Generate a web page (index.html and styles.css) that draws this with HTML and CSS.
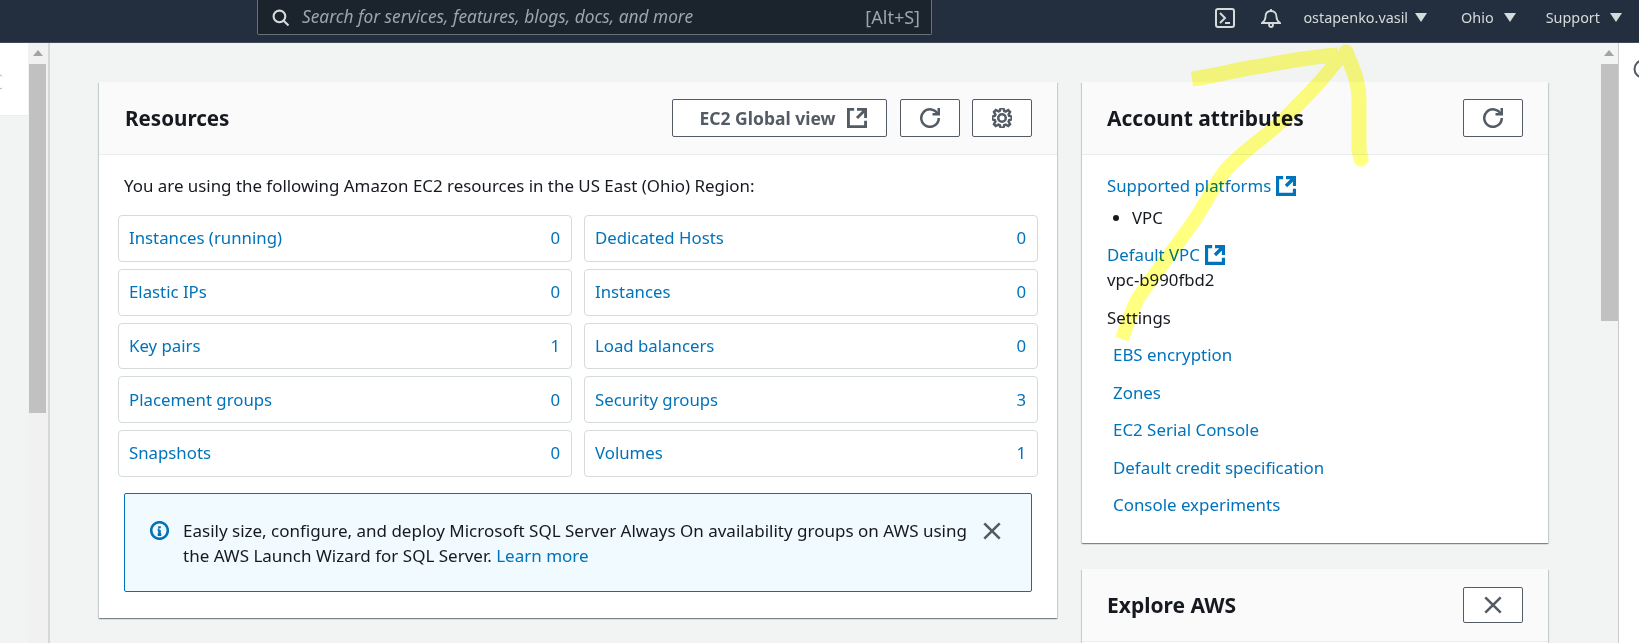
FILE: index.html
```html
<!DOCTYPE html>
<html lang="en">
<head>
<meta charset="utf-8">
<title>EC2 Dashboard</title>
<link rel="stylesheet" href="styles.css">
</head>
<body>
<header class="topbar">
  <div class="search">
    <svg class="search-icon" viewBox="0 0 16 16"><circle cx="7" cy="7" r="5.5"/><path d="M11 11l4.5 4.5"/></svg>
    <span class="search-text">Search for services, features, blogs, docs, and more</span>
    <span class="search-key">[Alt+S]</span>
  </div>
  <nav class="topnav">
    <svg class="shell" viewBox="0 0 20 20"><rect x="1" y="1" width="18" height="18" rx="2"/><path d="M5 5l5 5-5 5M10 15h5"/></svg>
    <svg class="bell" viewBox="0 0 20 20"><path d="M1 15h18c-2-1.500-3.500-3-3.500-6C15.500 5.500 13.500 3 10 3S4.500 5.500 4.500 9C4.500 12 3 13.500 1 15z"/><path d="M10 1v2"/><circle cx="10" cy="17" r="2"/></svg>
    <span class="nav-item user">ostapenko.vasil<i class="caret"></i></span>
    <span class="nav-item region">Ohio<i class="caret"></i></span>
    <span class="nav-item">Support<i class="caret"></i></span>
  </nav>
</header>

<div class="workspace">
  <aside class="sidenav">
    <svg class="side-mark" viewBox="0 0 2 16"><path d="M0 1l2 1M0 15l2-1"/></svg>
  </aside>
  <div class="scroll scroll-left"><i class="arrow"></i><i class="thumb thumb-left"></i></div>

  <main class="main">
    <section class="card">
      <div class="card-head">
        <h2>Resources</h2>
        <div class="actions">
          <button class="btn btn-wide">EC2 Global view
            <svg class="ico" viewBox="1 1 14 14"><path d="M14 8V2H8M14 2L8 8M6 2H2v12h12v-4"/></svg>
          </button>
          <button class="btn btn-icon"><svg class="ico" viewBox="0 0 16 16"><path d="M10 5h5V0"/><path d="M15 8a7 7 0 1 1-.7-3"/></svg></button>
          <button class="btn btn-icon"><svg class="ico" viewBox="0 0 16 16"><path d="M13.300 5.200l1.100-2.100L13 1.700l-2.100 1.100c-.3-.2-.7-.3-1.100-.4L9 0H7l-.8 2.300c-.3.1-.7.2-1 .4L3.100 1.600 1.600 3.100l1.100 2.100c-.2.3-.3.7-.4 1L0 7v2l2.300.8c.1.4.3.7.4 1.100l-1.100 2.100 1.400 1.400 2.100-1.100c.3.2.7.3 1.100.4L7 16h2l.8-2.300c.4-.1.7-.3 1.100-.4l2.100 1.100 1.400-1.400-1.100-2.100c.2-.3.3-.7.4-1.100L16 9V7l-2.300-.8c-.1-.3-.2-.7-.4-1z"/><circle cx="8" cy="8" r="3"/></svg></button>
        </div>
      </div>
      <div class="res-body">
        <p class="lead">You are using the following Amazon EC2 resources in the US East (Ohio) Region:</p>
        <div class="tiles">
          <a class="tile"><span>Instances (running)</span><span>0</span></a>
          <a class="tile"><span>Dedicated Hosts</span><span>0</span></a>
          <a class="tile"><span>Elastic IPs</span><span>0</span></a>
          <a class="tile"><span>Instances</span><span>0</span></a>
          <a class="tile"><span>Key pairs</span><span>1</span></a>
          <a class="tile"><span>Load balancers</span><span>0</span></a>
          <a class="tile"><span>Placement groups</span><span>0</span></a>
          <a class="tile"><span>Security groups</span><span>3</span></a>
          <a class="tile"><span>Snapshots</span><span>0</span></a>
          <a class="tile"><span>Volumes</span><span>1</span></a>
        </div>
        <div class="alert">
          <svg class="alert-icon" viewBox="0 0 16 16"><circle cx="8" cy="8" r="7"/><path d="M8 4.500v1.500M8 7.500v4M6.500 11.500h3M6.500 7.500H8"/></svg>
          <p class="alert-text">Easily size, configure, and deploy Microsoft SQL Server Always On availability groups on AWS using the AWS Launch Wizard for SQL Server. <a class="link">Learn more</a></p>
          <svg class="alert-close" viewBox="1 1 14 14"><path d="M2 2l12 12M14 2L2 14"/></svg>
        </div>
      </div>
    </section>

    <div class="side-col">
      <section class="card">
        <div class="card-head">
          <h2>Account attributes</h2>
          <button class="btn btn-icon"><svg class="ico" viewBox="0 0 16 16"><path d="M10 5h5V0"/><path d="M15 8a7 7 0 1 1-.7-3"/></svg></button>
        </div>
        <div class="attr-body">
          <a class="link ext">Supported platforms <svg class="ico-ext" viewBox="1 1 14 14"><path d="M14 8V2H8M14 2L8 8M6 2H2v12h12v-4"/></svg></a>
          <ul class="plats"><li>VPC</li></ul>
          <a class="link ext vpc-link">Default VPC <svg class="ico-ext" viewBox="1 1 14 14"><path d="M14 8V2H8M14 2L8 8M6 2H2v12h12v-4"/></svg></a>
          <div class="vpc-id">vpc-b990fbd2</div>
          <div class="settings">Settings</div>
          <div class="settings-links">
            <a class="link">EBS encryption</a>
            <a class="link">Zones</a>
            <a class="link">EC2 Serial Console</a>
            <a class="link">Default credit specification</a>
            <a class="link">Console experiments</a>
          </div>
        </div>
      </section>
      <section class="card">
        <div class="card-head">
          <h2>Explore AWS</h2>
          <button class="btn btn-icon btn-close"><svg class="close-ico" viewBox="1 1 14 14"><path d="M2 2l12 12M14 2L2 14"/></svg></button>
        </div>
        <div class="explore-body"></div>
      </section>
    </div>
  </main>

  <div class="scroll scroll-right"><i class="arrow"></i><i class="thumb thumb-right"></i></div>
  <aside class="rail">
    <svg class="rail-icon" viewBox="0 0 20 20"><circle cx="10" cy="10" r="8.500"/></svg>
  </aside>
</div>

<svg class="marker" viewBox="0 0 1639 643" aria-hidden="true">
  <path class="m-a" d="M1192 79C1215 76 1235 70 1255 67S1305 57 1338 55"/>
  <path class="m-b" d="M1346 52C1352 68 1359 80 1359 100L1359 150 1361 159"/>
  <path class="m-c" d="M1342 54C1325 78 1305 98 1285 118 1268 136 1240 152 1224 172 1210 192 1204 207 1191 225 1175 248 1150 280 1137 300 1130 315 1127 325 1122 339"/>
</svg>
</body>
</html>
```
FILE: styles.css
```css
* { box-sizing: border-box; }
html, body { margin: 0; height: 643px; overflow: hidden; }
body {
  font-family: "Noto Sans", "Open Sans", sans-serif;
  font-size: 16.800px;
  line-height: 22px;
  color: #16191f;
  background: #f2f3f3;
  display: flex;
  flex-direction: column;
  position: relative;
}
p, h2, ul { margin: 0; padding: 0; }

/* top bar */
.topbar {
  height: 43px;
  flex: none;
  background: #232f3e;
  border-bottom: 1px solid #3f4b5a;
  display: flex;
  align-items: flex-start;
  padding: 0 17px 0 257px;
}
.search {
  width: 675px;
  height: 35px;
  background: #1b232d;
  border: 1px solid #687078;
  border-top: 0;
  border-radius: 0 0 2px 2px;
  display: flex;
  align-items: center;
  padding: 0 11px 0 14px;
  color: #9aa5b1;
}
.search-icon { width: 17px; height: 17px; fill: none; stroke: #d5dbdb; stroke-width: 2; margin-right: 13px; flex: none; }
.search-text { font-style: italic; font-size: 17.300px; flex: 1; }
.search-key { font-size: 18px; }
.topnav { margin-left: auto; display: flex; align-items: center; height: 35px; color: #d5dbdb; font-size: 14.400px; }
.shell { width: 20px; height: 20px; fill: none; stroke: #d5dbdb; stroke-width: 2; }
.bell { width: 20px; height: 20px; fill: none; stroke: #d5dbdb; stroke-width: 1.800; margin: 0 22px 0 26px; }
.nav-item { display: flex; align-items: center; }
.user .caret { margin-left: 7px; }
.region { margin: 0 30px 0 34px; }
.caret {
  width: 0; height: 0; margin-left: 10px;
  border-left: 6px solid transparent;
  border-right: 6px solid transparent;
  border-top: 9px solid #d5dbdb;
}

/* workspace */
.workspace { flex: 1; display: flex; min-height: 0; }
.sidenav { width: 28px; flex: none; background: #fff; height: 73px; border-bottom: 1px solid #eaeded; margin-bottom: auto; }
.side-mark { width: 2px; height: 16px; margin-top: 31px; display: block; fill: none; stroke: #aab7b8; }
.scroll { flex: none; display: flex; flex-direction: column; align-items: center; background: #f1f1f1; }
.scroll-left { width: 22px; border-right: 2px solid #d5d8d8; padding-right: 1px; }
.scroll-right { width: 19px; border-right: 1px solid #c9cccc; background: #f2f3f3; }
.arrow {
  width: 0; height: 0; margin-top: 7px; margin-bottom: 8px;
  border-left: 5px solid transparent;
  border-right: 5px solid transparent;
  border-bottom: 6px solid #a3a3a3;
}
.thumb { width: 17px; background: #c1c1c1; display: block; }
.thumb-left { height: 349px; }
.thumb-right { height: 257px; }

.main {
  flex: none;
  width: 1550px;
  display: grid;
  grid-template-columns: 958px 466px;
  column-gap: 25px;
  align-items: start;
  padding: 39px 0 0 49px;
  overflow: hidden;
}
.side-col { display: flex; flex-direction: column; gap: 26px; }
.side-col .card-head { padding-left: 25px; }
.card {
  background: #fff;
  box-shadow: 0 1px 1px rgba(0,28,36,.35), 1px 1px 1px rgba(0,28,36,.12), -1px 1px 1px rgba(0,28,36,.12);
}
.card-head {
  height: 73px;
  background: #fafafa;
  border-bottom: 1px solid #eaeded;
  display: flex;
  align-items: center;
  justify-content: space-between;
  padding: 0 25px 1px 26px;
}
.card-head h2 { font-weight: 700; line-height: 26px; font-size: 20.600px; }
.side-col .card-head h2 { font-size: 21px; }
.actions { display: flex; gap: 12.500px; }
.btn {
  height: 38px;
  background: #fff;
  border: 1px solid #545b64;
  border-radius: 2px;
  color: #545b64;
  font: 700 17.500px/22px "Noto Sans", sans-serif;
  display: flex;
  align-items: center;
  justify-content: center;
  padding: 0;
}
.btn-wide { width: 215px; gap: 11px; padding-left: 7px; }
.btn-icon { width: 60px; }
.btn-close { height: 36px; }
.ico { width: 20px; height: 20px; fill: none; stroke: #545b64; stroke-width: 2; flex: none; }
.close-ico { width: 18px; height: 18px; fill: none; stroke: #545b64; stroke-width: 2; }

.link, .tile { color: #0073bb; text-decoration: none; }
.res-body { padding: 20px 19px 26px 19px; }
.lead { padding-left: 6px; font-size: 16.900px; }
.tiles {
  margin-top: 18px;
  display: grid;
  grid-template-columns: 1fr 1fr;
  column-gap: 12px;
  row-gap: 7px;
  grid-auto-rows: 46.750px;
}
.tile {
  border: 1px solid #d5dbdb;
  border-radius: 4px;
  display: flex;
  align-items: center;
  justify-content: space-between;
  padding: 0 11px 0 10px;
}
.alert {
  margin: 16px 6px 0 6px;
  height: 99px;
  background: #f1faff;
  border: 1px solid #0073bb;
  border-radius: 2px;
  display: flex;
  align-items: flex-start;
  padding: 24px 0 0 25px;
  line-height: 25px;
}
.alert-icon { width: 19px; height: 19px; margin: 3px 14px 0 0; flex: none; fill: none; stroke: #0073bb; stroke-width: 2.200; }
.alert-text { width: 785px; flex: none; font-size: 17px; }
.alert-close { width: 18px; height: 18px; flex: none; fill: none; stroke: #545b64; stroke-width: 2; margin: 4px 0 0 15px; }

.attr-body { padding: 20px 25px 27px; }
.ext { display: flex; align-items: center; gap: 5px; }
.ico-ext { width: 20px; height: 20px; fill: none; stroke: #0073bb; stroke-width: 2.400; flex: none; }
.plats { margin-top: 10px; padding-left: 25px; }
.vpc-link { margin-top: 15px; }
.vpc-id { margin-top: 3px; }
.settings { margin-top: 16px; }
.settings-links { margin-top: 15px; padding-left: 6px; display: flex; flex-direction: column; gap: 15.500px; font-size: 16.900px; }
.explore-body { height: 40px; }

.rail { flex: none; width: 20px; background: #fff; }
.rail-icon { display: block; width: 20px; height: 20px; margin: 16px 0 0 14px; fill: none; stroke: #545b64; stroke-width: 2; }

/* highlighter strokes */
.marker { position: absolute; left: 0; top: 0; width: 1639px; height: 643px; fill: none; pointer-events: none; mix-blend-mode: multiply; }
.marker path { stroke: #ffff80; stroke-linejoin: round; }
.m-a { stroke-width: 15; }
.m-b { stroke-width: 15; stroke-linecap: round; }
.m-c { stroke-width: 14; }
```
